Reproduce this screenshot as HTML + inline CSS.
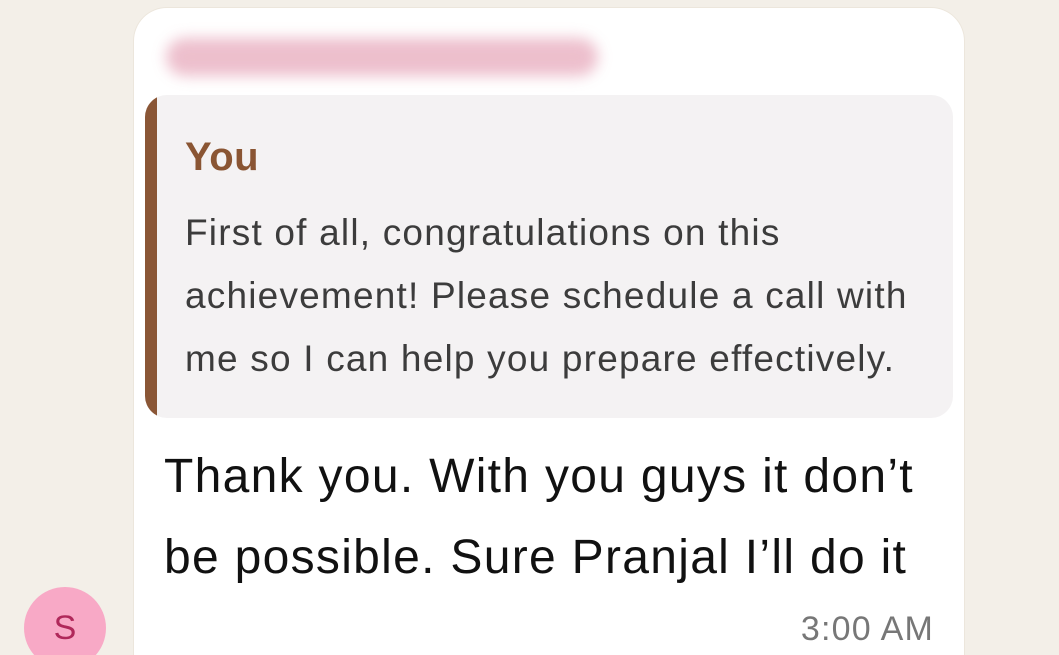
<!DOCTYPE html>
<html style="overflow:hidden;height:655px"><head><style>
body{margin:0;width:1059px;height:655px;overflow:hidden;background:#f3efe8;font-family:"Liberation Sans",sans-serif}
.wrap{position:relative;width:1059px;height:655px;overflow:hidden}
.bub{position:absolute;left:133px;top:7px;width:832px;height:648px;background:#fff;border-radius:34px 34px 0 0;border:1px solid #ece6dc;border-bottom:none;box-sizing:border-box}
.name{position:absolute;left:32px;top:30px;width:432px;height:38px;background:#eab4c4;border-radius:19px;filter:blur(7px);opacity:.85}
.q{position:absolute;left:11px;top:87px;width:808px;height:323px;background:#f4f2f3;border-radius:22px;overflow:hidden}
.q:before{content:"";position:absolute;left:0;top:0;bottom:0;width:12px;background:#8a5636}
.you{position:absolute;left:40px;top:40px;font-size:40px;color:#8a5533;font-weight:bold;letter-spacing:0.5px}
.qt{position:absolute;left:40px;top:106px;font-size:37px;letter-spacing:1.2px;line-height:63px;color:#3c3c3c;width:790px;white-space:nowrap}
.m{position:absolute;left:30px;top:428px;font-size:48px;letter-spacing:1.3px;line-height:81px;color:#111;width:800px;white-space:nowrap}
.t{position:absolute;right:30px;top:602px;font-size:34px;letter-spacing:1.2px;color:#777}
.av{position:absolute;left:24px;top:587px;width:82px;height:82px;border-radius:50%;background:#f8a9c6;color:#b0285a;font-size:34px;text-align:center;line-height:82px}
</style></head><body><div class="wrap">
<div class="bub">
<div class="name"></div>
<div class="q"><div class="you">You</div>
<div class="qt">First of all, congratulations on this<br>achievement! Please schedule a call with<br>me so I can help you prepare effectively.</div></div>
<div class="m">Thank you. With you guys it don’t<br>be possible. Sure Pranjal I’ll do it</div>
<div class="t">3:00 AM</div>
</div>
<div class="av">S</div>
</div></body></html>
